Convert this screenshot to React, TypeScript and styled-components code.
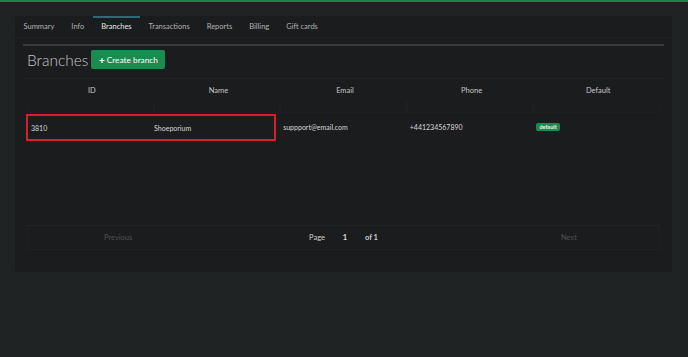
import { createGlobalStyle, styled } from 'styled-components';

interface Branch {
  id: string;
  name: string;
  email: string;
  phone: string;
  isDefault: boolean;
}

const tabs = ['Summary', 'Info', 'Branches', 'Transactions', 'Reports', 'Billing', 'Gift cards'];
const columns = ['ID', 'Name', 'Email', 'Phone', 'Default'];

const branches: Branch[] = [
  { id: '3810', name: 'Shoeporium', email: 'suppport@email.com', phone: '+441234567890', isDefault: true },
];

const App = () => {
  return (
    <>
      <GlobalStyle />
      <TopLine />
      <Page>
        <Card>
          <TabBar>
            {tabs.map((tab) => (
              <Tab key={tab} $active={tab === 'Branches'}>
                {tab}
              </Tab>
            ))}
          </TabBar>
          <Content>
            <Divider />
            <TitleRow>
              <Title>Branches</Title>
              <CreateButton>
                <span>+</span>Create branch
              </CreateButton>
            </TitleRow>
            <Table>
              <HeaderRow>
                {columns.map((col) => (
                  <HeaderCell key={col}>{col}</HeaderCell>
                ))}
              </HeaderRow>
              <FilterRow>
                {columns.map((col) => (
                  <FilterCell key={col} />
                ))}
              </FilterRow>
              {branches.map((branch) => (
                <DataRow key={branch.id}>
                  <Highlight>
                    <Cell>{branch.id}</Cell>
                    <Cell>{branch.name}</Cell>
                  </Highlight>
                  <Cell>{branch.email}</Cell>
                  <Cell>{branch.phone}</Cell>
                  <Cell>{branch.isDefault && <Badge>default</Badge>}</Cell>
                </DataRow>
              ))}
              <Spacer />
              <Pagination>
                <PageButton>Previous</PageButton>
                <PageInfo>
                  <span>Page</span>
                  <PageInput>1</PageInput>
                  <PageTotal>of 1</PageTotal>
                </PageInfo>
                <PageButton>Next</PageButton>
              </Pagination>
            </Table>
          </Content>
        </Card>
      </Page>
    </>
  );
};

const GlobalStyle = createGlobalStyle`
  html, body {
    margin: 0;
    background-color: #202323;
    font-family: Lato, "Noto Sans", sans-serif;
    color: #d4d4d4;
  }
`;

const TopLine = styled.div`
  height: 2px;
  background-color: #178a4b;
`;

const Page = styled.div`
  padding: 14px 16px 0 15px;
`;

const Card = styled.div`
  width: 657px;
  height: 256px;
  background-color: #1b1c1e;
  border-radius: 2px;
  display: flex;
  flex-direction: column;
`;

const TabBar = styled.div`
  height: 21px;
  display: flex;
  border-bottom: 1px solid #1f2022;
`;

const Tab = styled.div<{ $active?: boolean }>`
  padding: 0 8.5px 2px;
  display: flex;
  align-items: center;
  font-size: 7.5px;
  color: ${({ $active }) => ($active ? '#e6e6e6' : '#b0b0b0')};
  border-top: 2px solid ${({ $active }) => ($active ? '#2a6b74' : 'transparent')};
  box-sizing: border-box;
`;

const Content = styled.div`
  padding: 6px 8px 0;
  display: flex;
  flex-direction: column;
  flex: 1;
`;

const Divider = styled.div`
  height: 2px;
  background-color: #3a3b3d;
`;

const TitleRow = styled.div`
  height: 27px;
  display: flex;
  align-items: center;
  gap: 3px;
  padding: 0 0 5px 4px;
  border-bottom: 1px solid #222325;
`;

const Title = styled.h2`
  margin: 0;
  font-size: 15.5px;
  font-weight: 300;
  color: #c4c4c4;
`;

const CreateButton = styled.button`
  height: 19px;
  width: 74px;
  padding: 0;
  border: none;
  border-radius: 2px;
  background-color: #1a8c4f;
  color: #ffffff;
  font-family: inherit;
  font-size: 8.3px;
  display: flex;
  align-items: center;
  justify-content: center;
  gap: 2px;

  & > span {
    font-weight: 900;
    font-size: 10px;
  }
`;

const Table = styled.div`
  margin: 0 4px;
  display: flex;
  flex-direction: column;
  flex: 1;
`;

const HeaderRow = styled.div`
  display: grid;
  grid-template-columns: repeat(5, 1fr);
  height: 22px;
`;

const HeaderCell = styled.div`
  display: flex;
  align-items: center;
  justify-content: center;
  padding-left: 3px;
  font-size: 7.5px;
  color: #c8c8c8;
`;

const FilterRow = styled.div`
  display: grid;
  grid-template-columns: repeat(5, 1fr);
  height: 12px;
`;

const FilterCell = styled.div`
  border: 1px solid #1e1f21;
  border-top: none;
`;

const DataRow = styled.div`
  display: grid;
  grid-template-columns: repeat(5, 1fr);
  height: 28px;
`;

const Highlight = styled.div`
  grid-column: span 2;
  display: grid;
  grid-template-columns: 1fr 1fr;
  border: 2px solid #d61f2e;
  margin: 1px 4px 0 -1px;
`;

const Cell = styled.div`
  display: flex;
  align-items: center;
  padding-left: 3px;
  font-size: 7px;
  color: #d8d8d8;
`;

const Badge = styled.span`
  background-color: #1a8c4f;
  color: #e8f5ec;
  font-size: 5.5px;
  font-weight: 700;
  padding: 1px 3px;
  border-radius: 2px;
`;

const Spacer = styled.div`
  flex: 0 0 84px;
  border-bottom: 1px solid #222325;
`;

const Pagination = styled.div`
  display: grid;
  grid-template-columns: 1fr 1.5fr 1fr;
  height: 23px;
  border: 1px solid #1f2022;
  border-top: none;
`;

const PageButton = styled.div`
  display: flex;
  align-items: center;
  justify-content: center;
  font-size: 7.5px;
  color: #4f5052;
`;

const PageInfo = styled.div`
  display: flex;
  align-items: center;
  justify-content: center;
  gap: 9px;
  font-size: 7.5px;
  color: #d0d0d0;
`;

const PageInput = styled.span`
  width: 22px;
  text-align: center;
  background-color: #1b1c1e;
  color: #e0e0e0;
  font-weight: 700;
`;

const PageTotal = styled.span`
  font-weight: 700;
`;

export default App;
